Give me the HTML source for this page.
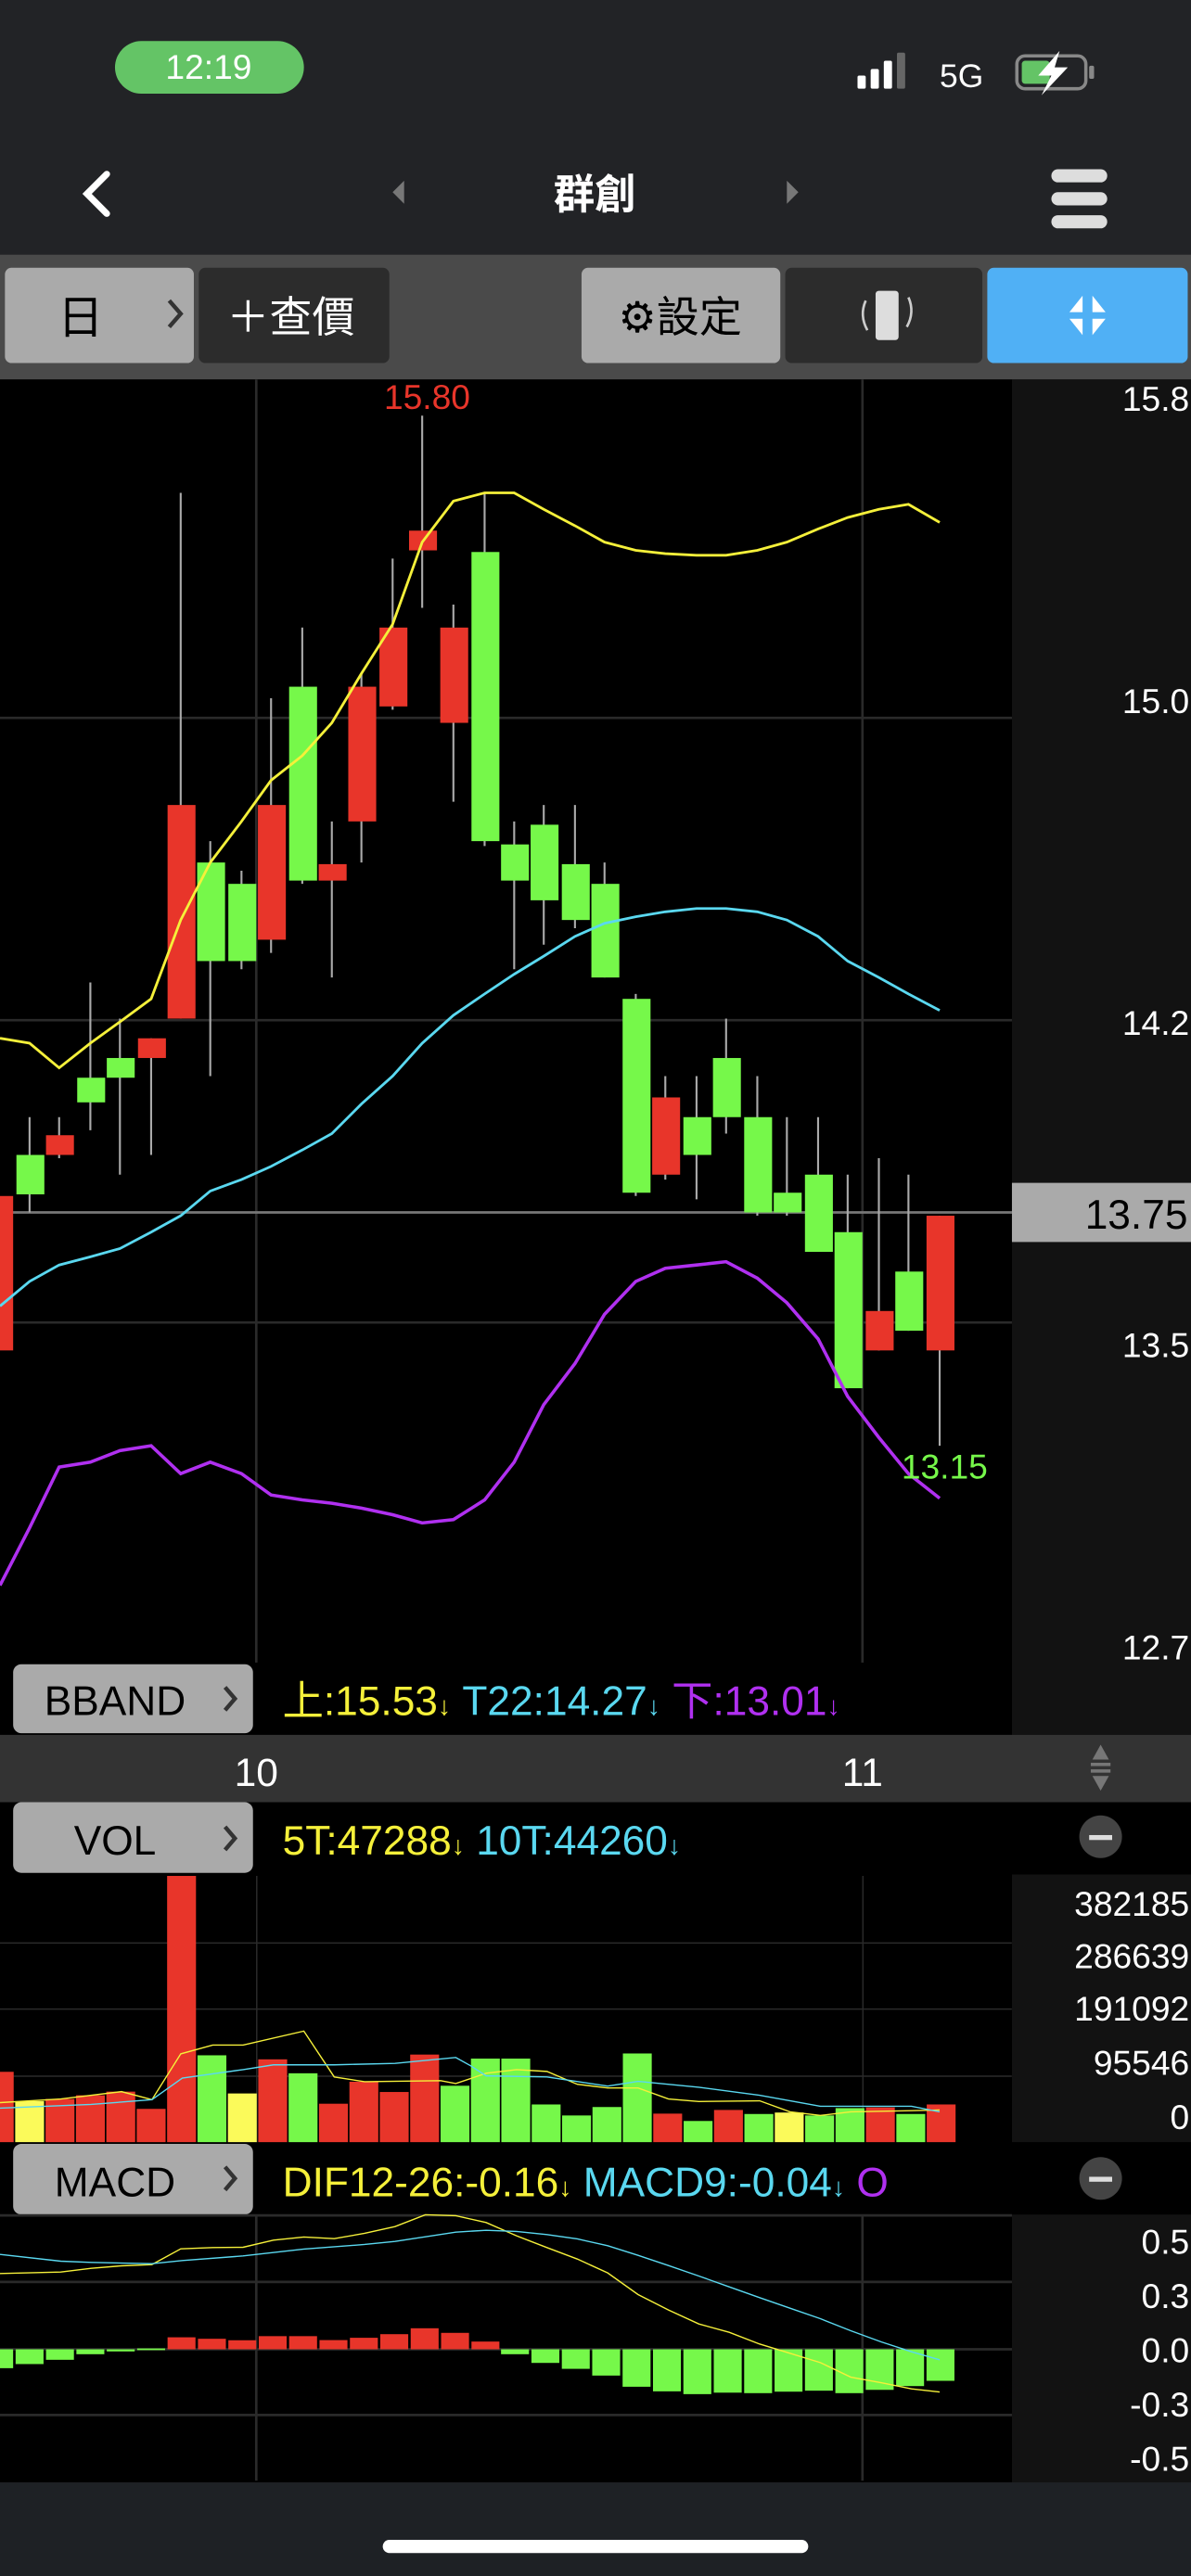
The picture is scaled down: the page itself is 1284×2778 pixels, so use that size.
<!DOCTYPE html>
<html><head><meta charset="utf-8"><style>
html,body{margin:0;padding:0;background:#000;}
svg{display:block}
text{font-family:"Liberation Sans","Noto Sans CJK TC",sans-serif;}
</style></head><body>
<svg width="1284" height="2778" viewBox="0 0 725 1568" preserveAspectRatio="none" xmlns="http://www.w3.org/2000/svg">
<!-- header -->
<rect x="0" y="0" width="725" height="155" fill="#222326"/>
<rect x="70" y="25" width="115" height="32" rx="16" fill="#64c466"/>
<text x="127" y="48" fill="#fff" font-size="21" text-anchor="middle">12:19</text>
<rect x="522" y="46" width="5" height="8" rx="1" fill="#fff"/>
<rect x="530" y="42" width="5" height="12" rx="1" fill="#fff"/>
<rect x="538" y="37" width="5" height="17" rx="1" fill="#fff"/>
<rect x="546" y="32" width="5" height="22" rx="1" fill="#666"/>
<text x="572" y="53" fill="#fff" font-size="20">5G</text>
<rect x="619" y="34" width="42" height="20" rx="5" fill="none" stroke="#888" stroke-width="2"/>
<rect x="622" y="37" width="17" height="14" rx="2" fill="#64c466"/>
<rect x="663" y="40" width="3" height="8" rx="1" fill="#888"/>
<path d="M645 31 L632 46 L640 46 L634 58 L650 41 L642 41 Z" fill="#fff"/>
<path d="M65 106 L53 118 L65 130" fill="none" stroke="#fff" stroke-width="4" stroke-linecap="round"/>
<path d="M246 110 L239 117 L246 124 Z" fill="#777"/>
<path d="M479 110 L486 117 L479 124 Z" fill="#777"/>
<text x="362" y="127" fill="#fff" font-size="25" font-weight="bold" text-anchor="middle">群創</text>
<rect x="640" y="103" width="34" height="8" rx="4" fill="#ddd"/>
<rect x="640" y="117" width="34" height="8" rx="4" fill="#ddd"/>
<rect x="640" y="131" width="34" height="8" rx="4" fill="#ddd"/>
<!-- toolbar -->
<rect x="0" y="155" width="725" height="76" fill="#4a4a4a"/>
<rect x="3" y="163" width="115" height="58" rx="4" fill="#aaa"/>
<text x="49" y="203" fill="#000" font-size="28" text-anchor="middle">日</text>
<path d="M103 183 L110 191 L103 199" fill="none" stroke="#333" stroke-width="2.5"/>
<rect x="121" y="163" width="116" height="58" rx="4" fill="#2c2c2c"/>
<text x="177" y="202" fill="#fff" font-size="26" text-anchor="middle">＋查價</text>
<rect x="354" y="163" width="121" height="58" rx="4" fill="#aaa"/>
<text x="414" y="202" fill="#000" font-size="26" text-anchor="middle">⚙設定</text>
<rect x="478" y="163" width="120" height="58" rx="4" fill="#2c2c2c"/>
<rect x="533" y="177" width="14" height="30" rx="2" fill="#ddd"/>
<path d="M527 183 Q523 192 528 201 M553 181 Q557 190 552 199" fill="none" stroke="#ccc" stroke-width="1.5"/>
<rect x="601" y="163" width="122" height="58" rx="4" fill="#50b0f5"/>
<path d="M659 180 L659 190 L651 190 Z M665 180 L665 190 L673 190 Z M659 204 L659 194 L651 194 Z M665 204 L665 194 L673 194 Z" fill="#fff"/>
<!-- price chart -->
<rect x="0" y="231" width="616" height="781" fill="#000"/>
<rect x="616" y="231" width="109" height="825" fill="#121212"/>
<g stroke="#2a2a2a" stroke-width="1.5">
<line x1="0" y1="437" x2="616" y2="437"/><line x1="0" y1="621" x2="616" y2="621"/><line x1="0" y1="805" x2="616" y2="805"/>
<line x1="156" y1="231" x2="156" y2="1012"/><line x1="525" y1="231" x2="525" y2="1012"/>
</g>
<line x1="0" y1="738" x2="616" y2="738" stroke="#777" stroke-width="1.5"/>
<g fill="#fff" font-size="21" text-anchor="end">
<text x="724" y="250">15.8</text><text x="724" y="434">15.0</text><text x="724" y="630">14.2</text><text x="724" y="826">13.5</text><text x="724" y="1010">12.7</text>
</g>
<rect x="616" y="720" width="109" height="36" fill="#aaa"/>
<text x="723" y="748" fill="#000" font-size="25" text-anchor="end">13.75</text>
<!-- candles -->
<g stroke="#aaa" stroke-width="1.2">
<line x1="18" y1="680" x2="18" y2="738"/><line x1="36" y1="680" x2="36" y2="705"/><line x1="55" y1="598" x2="55" y2="688"/>
<line x1="73" y1="620" x2="73" y2="715"/><line x1="92" y1="632" x2="92" y2="703"/><line x1="110" y1="300" x2="110" y2="620"/>
<line x1="128" y1="512" x2="128" y2="655"/><line x1="147" y1="530" x2="147" y2="590"/><line x1="165" y1="425" x2="165" y2="580"/>
<line x1="184" y1="382" x2="184" y2="538"/><line x1="202" y1="500" x2="202" y2="595"/><line x1="220" y1="410" x2="220" y2="525"/>
<line x1="239" y1="340" x2="239" y2="432"/><line x1="257" y1="253" x2="257" y2="370"/><line x1="276" y1="368" x2="276" y2="488"/>
<line x1="295" y1="300" x2="295" y2="515"/><line x1="313" y1="500" x2="313" y2="590"/><line x1="331" y1="490" x2="331" y2="575"/>
<line x1="350" y1="490" x2="350" y2="565"/><line x1="368" y1="525" x2="368" y2="595"/><line x1="387" y1="605" x2="387" y2="728"/>
<line x1="405" y1="655" x2="405" y2="718"/><line x1="424" y1="655" x2="424" y2="730"/><line x1="442" y1="620" x2="442" y2="690"/>
<line x1="461" y1="655" x2="461" y2="740"/><line x1="479" y1="680" x2="479" y2="740"/><line x1="498" y1="680" x2="498" y2="762"/>
<line x1="516" y1="715" x2="516" y2="845"/><line x1="535" y1="705" x2="535" y2="822"/><line x1="553" y1="715" x2="553" y2="810"/>
<line x1="572" y1="740" x2="572" y2="880"/>
</g>
<g fill="#e8352a">
<rect x="-8" y="728" width="16" height="94"/><rect x="28" y="691" width="17" height="12"/><rect x="84" y="632" width="17" height="12"/>
<rect x="102" y="490" width="17" height="130"/><rect x="157" y="490" width="17" height="82"/><rect x="194" y="526" width="17" height="10"/>
<rect x="212" y="418" width="17" height="82"/><rect x="231" y="382" width="17" height="48"/><rect x="249" y="323" width="17" height="12"/>
<rect x="268" y="382" width="17" height="58"/><rect x="397" y="668" width="17" height="47"/><rect x="527" y="798" width="17" height="24"/>
<rect x="564" y="740" width="17" height="82"/>
</g>
<g fill="#76f84a">
<rect x="10" y="703" width="17" height="24"/><rect x="47" y="656" width="17" height="15"/><rect x="65" y="644" width="17" height="12"/>
<rect x="120" y="525" width="17" height="60"/><rect x="139" y="538" width="17" height="47"/><rect x="176" y="418" width="17" height="118"/>
<rect x="287" y="336" width="17" height="176"/><rect x="305" y="514" width="17" height="22"/><rect x="323" y="502" width="17" height="46"/>
<rect x="342" y="526" width="17" height="34"/><rect x="360" y="538" width="17" height="57"/><rect x="379" y="608" width="17" height="118"/>
<rect x="416" y="680" width="17" height="23"/><rect x="434" y="644" width="17" height="36"/><rect x="453" y="680" width="17" height="58"/>
<rect x="471" y="726" width="17" height="12"/><rect x="490" y="715" width="17" height="47"/><rect x="508" y="750" width="17" height="95"/>
<rect x="545" y="774" width="17" height="36"/>
</g>
<polyline fill="none" stroke="#f5f03a" stroke-width="1.6" points="0,632 18,635 36,650 55,635 73,622 92,608 110,560 128,525 147,500 165,475 184,460 202,440 220,410 239,380 257,330 276,305 295,300 313,300 331,310 350,320 368,330 387,335 405,337 424,338 442,338 461,335 479,330 498,322 516,315 535,310 553,307 572,318"/>
<polyline fill="none" stroke="#5ad8f0" stroke-width="1.6" points="0,795 18,780 36,770 55,765 73,760 92,750 110,740 128,725 147,718 165,710 184,700 202,690 220,672 239,655 257,635 276,618 295,605 313,593 331,582 350,570 368,562 387,558 405,555 424,553 442,553 461,555 479,560 498,570 516,585 535,595 553,605 572,615"/>
<polyline fill="none" stroke="#b030f0" stroke-width="2" points="0,965 18,930 36,893 55,890 73,883 92,880 110,897 128,890 147,897 165,910 184,913 202,915 220,918 239,922 257,927 276,925 295,913 313,890 331,855 350,830 368,800 387,780 405,772 424,770 442,768 461,778 479,793 498,815 516,850 535,875 553,897 572,912"/>
<text x="260" y="249" fill="#e8352a" font-size="21" text-anchor="middle">15.80</text>
<text x="575" y="900" fill="#76f84a" font-size="21" text-anchor="middle">13.15</text>
<!-- BBAND legend -->
<rect x="0" y="1012" width="616" height="44" fill="#000"/>
<rect x="8" y="1013" width="146" height="42" rx="5" fill="#aaa"/>
<text x="70" y="1044" fill="#000" font-size="25" text-anchor="middle">BBAND</text>
<path d="M137 1027 L143 1034 L137 1041" fill="none" stroke="#333" stroke-width="2.5"/>
<text x="172" y="1044" font-size="25"><tspan fill="#f5f03a">上:15.53</tspan><tspan fill="#f5f03a" font-size="16">↓</tspan><tspan fill="#5ad8f0"> T22:14.27</tspan><tspan fill="#5ad8f0" font-size="16">↓</tspan><tspan fill="#b030f0"> 下:13.01</tspan><tspan fill="#b030f0" font-size="16">↓</tspan></text>
<!-- date axis -->
<rect x="0" y="1056" width="725" height="41" fill="#333"/>
<text x="156" y="1087" fill="#fff" font-size="24" text-anchor="middle">10</text>
<text x="525" y="1087" fill="#fff" font-size="24" text-anchor="middle">11</text>
<path d="M665 1071 L670 1062 L675 1071 Z M665 1081 L670 1090 L675 1081 Z" fill="#777"/>
<rect x="664" y="1073" width="12" height="2" fill="#777"/><rect x="664" y="1077" width="12" height="2" fill="#777"/>
<!-- VOL legend -->
<rect x="0" y="1097" width="725" height="44" fill="#000"/>
<rect x="8" y="1097" width="146" height="43" rx="5" fill="#aaa"/>
<text x="70" y="1129" fill="#000" font-size="25" text-anchor="middle">VOL</text>
<path d="M137 1112 L143 1119 L137 1126" fill="none" stroke="#333" stroke-width="2.5"/>
<text x="172" y="1129" font-size="25"><tspan fill="#f5f03a">5T:47288</tspan><tspan fill="#f5f03a" font-size="16">↓</tspan><tspan fill="#5ad8f0"> 10T:44260</tspan><tspan fill="#5ad8f0" font-size="16">↓</tspan></text>
<circle cx="670" cy="1118" r="13" fill="#444"/><rect x="663" y="1117" width="14" height="3" fill="#ddd"/>
<!-- VOL chart -->
<rect x="616" y="1141" width="109" height="164" fill="#121212"/>
<g transform="translate(0,1005.2) scale(0.4624,0.2233)">
<g stroke="#2a2a2a" stroke-width="1.5" vector-effect="non-scaling-stroke">
<line x1="0" y1="795" x2="1332" y2="795" vector-effect="non-scaling-stroke"/><line x1="0" y1="975" x2="1332" y2="975" vector-effect="non-scaling-stroke"/><line x1="0" y1="1158" x2="1332" y2="1158" vector-effect="non-scaling-stroke"/>
<line x1="338" y1="612" x2="338" y2="1338" vector-effect="non-scaling-stroke"/><line x1="1136" y1="612" x2="1136" y2="1338" vector-effect="non-scaling-stroke"/>
</g>
<g fill="#e8352a">
<rect x="-20" y="1146" width="38" height="192"/><rect x="60" y="1220" width="38" height="118"/><rect x="100" y="1210" width="38" height="128"/><rect x="140" y="1200" width="38" height="138"/><rect x="180" y="1247" width="38" height="91"/><rect x="220" y="612" width="38" height="726"/>
<rect x="340" y="1112" width="38" height="226"/><rect x="420" y="1233" width="38" height="105"/><rect x="460" y="1173" width="38" height="165"/><rect x="500" y="1201" width="38" height="137"/><rect x="540" y="1099" width="38" height="239"/>
<rect x="860" y="1260" width="38" height="78"/><rect x="940" y="1250" width="38" height="88"/><rect x="1140" y="1243" width="38" height="95"/><rect x="1220" y="1235" width="38" height="103"/>
</g>
<g fill="#fbfa5a">
<rect x="20" y="1226" width="38" height="112"/><rect x="300" y="1205" width="38" height="133"/><rect x="1020" y="1257" width="38" height="81"/>
</g>
<g fill="#76f84a">
<rect x="260" y="1101" width="38" height="237"/><rect x="380" y="1150" width="38" height="188"/><rect x="580" y="1184" width="38" height="154"/><rect x="620" y="1110" width="38" height="228"/><rect x="660" y="1110" width="38" height="228"/>
<rect x="700" y="1235" width="38" height="103"/><rect x="740" y="1265" width="38" height="73"/><rect x="780" y="1242" width="38" height="96"/><rect x="820" y="1096" width="38" height="242"/><rect x="900" y="1280" width="38" height="58"/>
<rect x="980" y="1261" width="38" height="77"/><rect x="1060" y="1265" width="38" height="73"/><rect x="1100" y="1245" width="38" height="93"/><rect x="1180" y="1261" width="38" height="77"/>
</g>
<polyline fill="none" stroke="#f5f03a" stroke-width="1.4" vector-effect="non-scaling-stroke" points="0,1230 80,1220 160,1200 200,1222 238,1097 280,1073 320,1073 400,1035 440,1160 480,1173 580,1170 600,1178 640,1150 680,1140 720,1145 760,1180 800,1190 840,1190 880,1220 920,1227 1000,1225 1040,1255 1080,1265 1120,1255 1200,1252 1237,1250"/>
<polyline fill="none" stroke="#5ad8f0" stroke-width="1.4" vector-effect="non-scaling-stroke" points="0,1245 120,1235 200,1222 240,1163 320,1140 360,1127 440,1127 520,1123 600,1107 620,1130 640,1157 720,1160 800,1185 840,1172 920,1188 1000,1210 1080,1240 1200,1240 1237,1255"/>
</g>
<g fill="#fff" font-size="21" text-anchor="end">
<text x="724" y="1166">382185</text><text x="724" y="1198">286639</text><text x="724" y="1230">191092</text><text x="724" y="1263">95546</text><text x="724" y="1296">0</text>
</g>
<!-- MACD legend -->
<rect x="0" y="1304" width="725" height="44" fill="#000"/>
<rect x="8" y="1305" width="146" height="43" rx="5" fill="#aaa"/>
<text x="70" y="1337" fill="#000" font-size="25" text-anchor="middle">MACD</text>
<path d="M137 1319 L143 1326 L137 1333" fill="none" stroke="#333" stroke-width="2.5"/>
<text x="172" y="1337" font-size="25"><tspan fill="#f5f03a">DIF12-26:-0.16</tspan><tspan fill="#f5f03a" font-size="16">↓</tspan><tspan fill="#5ad8f0"> MACD9:-0.04</tspan><tspan fill="#5ad8f0" font-size="16">↓</tspan><tspan fill="#b030f0"> O</tspan></text>
<rect x="616" y="1304" width="109" height="44" fill="#000"/>
<circle cx="670" cy="1326" r="13" fill="#444"/><rect x="663" y="1325" width="14" height="3" fill="#ddd"/>
<!-- MACD chart -->
<rect x="616" y="1348" width="109" height="163" fill="#121212"/>
<g stroke="#2a2a2a" stroke-width="1.5">
<line x1="0" y1="1348.5" x2="616" y2="1348.5"/><line x1="0" y1="1389" x2="616" y2="1389"/><line x1="0" y1="1430" x2="616" y2="1430"/><line x1="0" y1="1470" x2="616" y2="1470"/>
<line x1="156" y1="1348" x2="156" y2="1510"/><line x1="525" y1="1348" x2="525" y2="1510"/>
</g>
<g fill="#76f84a">
<rect x="-8" y="1430" width="16" height="11.5"/><rect x="9.5" y="1430" width="17" height="9"/><rect x="28" y="1430" width="17" height="6.4"/><rect x="46.5" y="1430" width="17" height="3"/><rect x="65" y="1430" width="17" height="1.3"/><rect x="83.5" y="1429.5" width="17" height="1"/>
<rect x="305" y="1430" width="17" height="3"/><rect x="323.5" y="1430" width="17" height="8.3"/><rect x="342" y="1430" width="17" height="11.9"/><rect x="360.5" y="1430" width="17" height="16"/><rect x="379" y="1430" width="17" height="22.8"/><rect x="397.5" y="1430" width="17" height="25.6"/><rect x="416" y="1430" width="17" height="27.3"/><rect x="434.5" y="1430" width="17" height="26.4"/><rect x="453" y="1430" width="17" height="26.7"/><rect x="471.5" y="1430" width="17" height="25.8"/><rect x="490" y="1430" width="17" height="25.2"/><rect x="508.5" y="1430" width="17" height="26.7"/><rect x="527" y="1430" width="17" height="24.7"/><rect x="545.5" y="1430" width="17" height="22.4"/><rect x="564" y="1430" width="17" height="19.2"/>
</g>
<g fill="#e8352a">
<rect x="102" y="1422.7" width="17" height="7.3"/><rect x="120.5" y="1423.6" width="17" height="6.4"/><rect x="139" y="1424.5" width="17" height="5.5"/><rect x="157.5" y="1422" width="17" height="8"/><rect x="176" y="1422" width="17" height="8"/><rect x="194.5" y="1424.4" width="17" height="5.6"/><rect x="213" y="1423" width="17" height="7"/><rect x="231.5" y="1420.8" width="17" height="9.2"/><rect x="250" y="1417.2" width="17" height="12.8"/><rect x="268.5" y="1420" width="17" height="10"/><rect x="287" y="1425.3" width="17" height="4.7"/>
</g>
<g transform="translate(0,1344) scale(0.4624,0.1882)">
<polyline fill="none" stroke="#f5f03a" stroke-width="1.4" vector-effect="non-scaling-stroke" points="0,212 80,207 120,195 160,187 200,183 238,132 280,128 320,127 360,104 400,94 440,99 480,82 520,60 560,22 600,25 640,47 680,90 720,128 760,165 800,210 840,280 880,330 920,375 960,402 1000,440 1040,470 1080,500 1120,547 1160,565 1200,585 1237,595"/>
<polyline fill="none" stroke="#5ad8f0" stroke-width="1.4" vector-effect="non-scaling-stroke" points="0,150 80,172 120,176 200,180 240,170 320,155 400,133 480,118 520,108 560,93 600,78 640,72 680,76 720,86 760,100 800,122 840,153 880,186 920,220 960,255 1000,290 1040,324 1080,358 1120,397 1160,433 1200,465 1237,491"/>
</g>
<g fill="#fff" font-size="21" text-anchor="end">
<text x="724" y="1372">0.5</text><text x="724" y="1405">0.3</text><text x="724" y="1438">0.0</text><text x="724" y="1471">-0.3</text><text x="724" y="1504">-0.5</text>
</g>
<!-- bottom -->
<rect x="0" y="1511" width="725" height="57" fill="#1e2125"/>
<rect x="233" y="1546" width="259" height="8" rx="4" fill="#fff"/>
</svg>
</body></html>
